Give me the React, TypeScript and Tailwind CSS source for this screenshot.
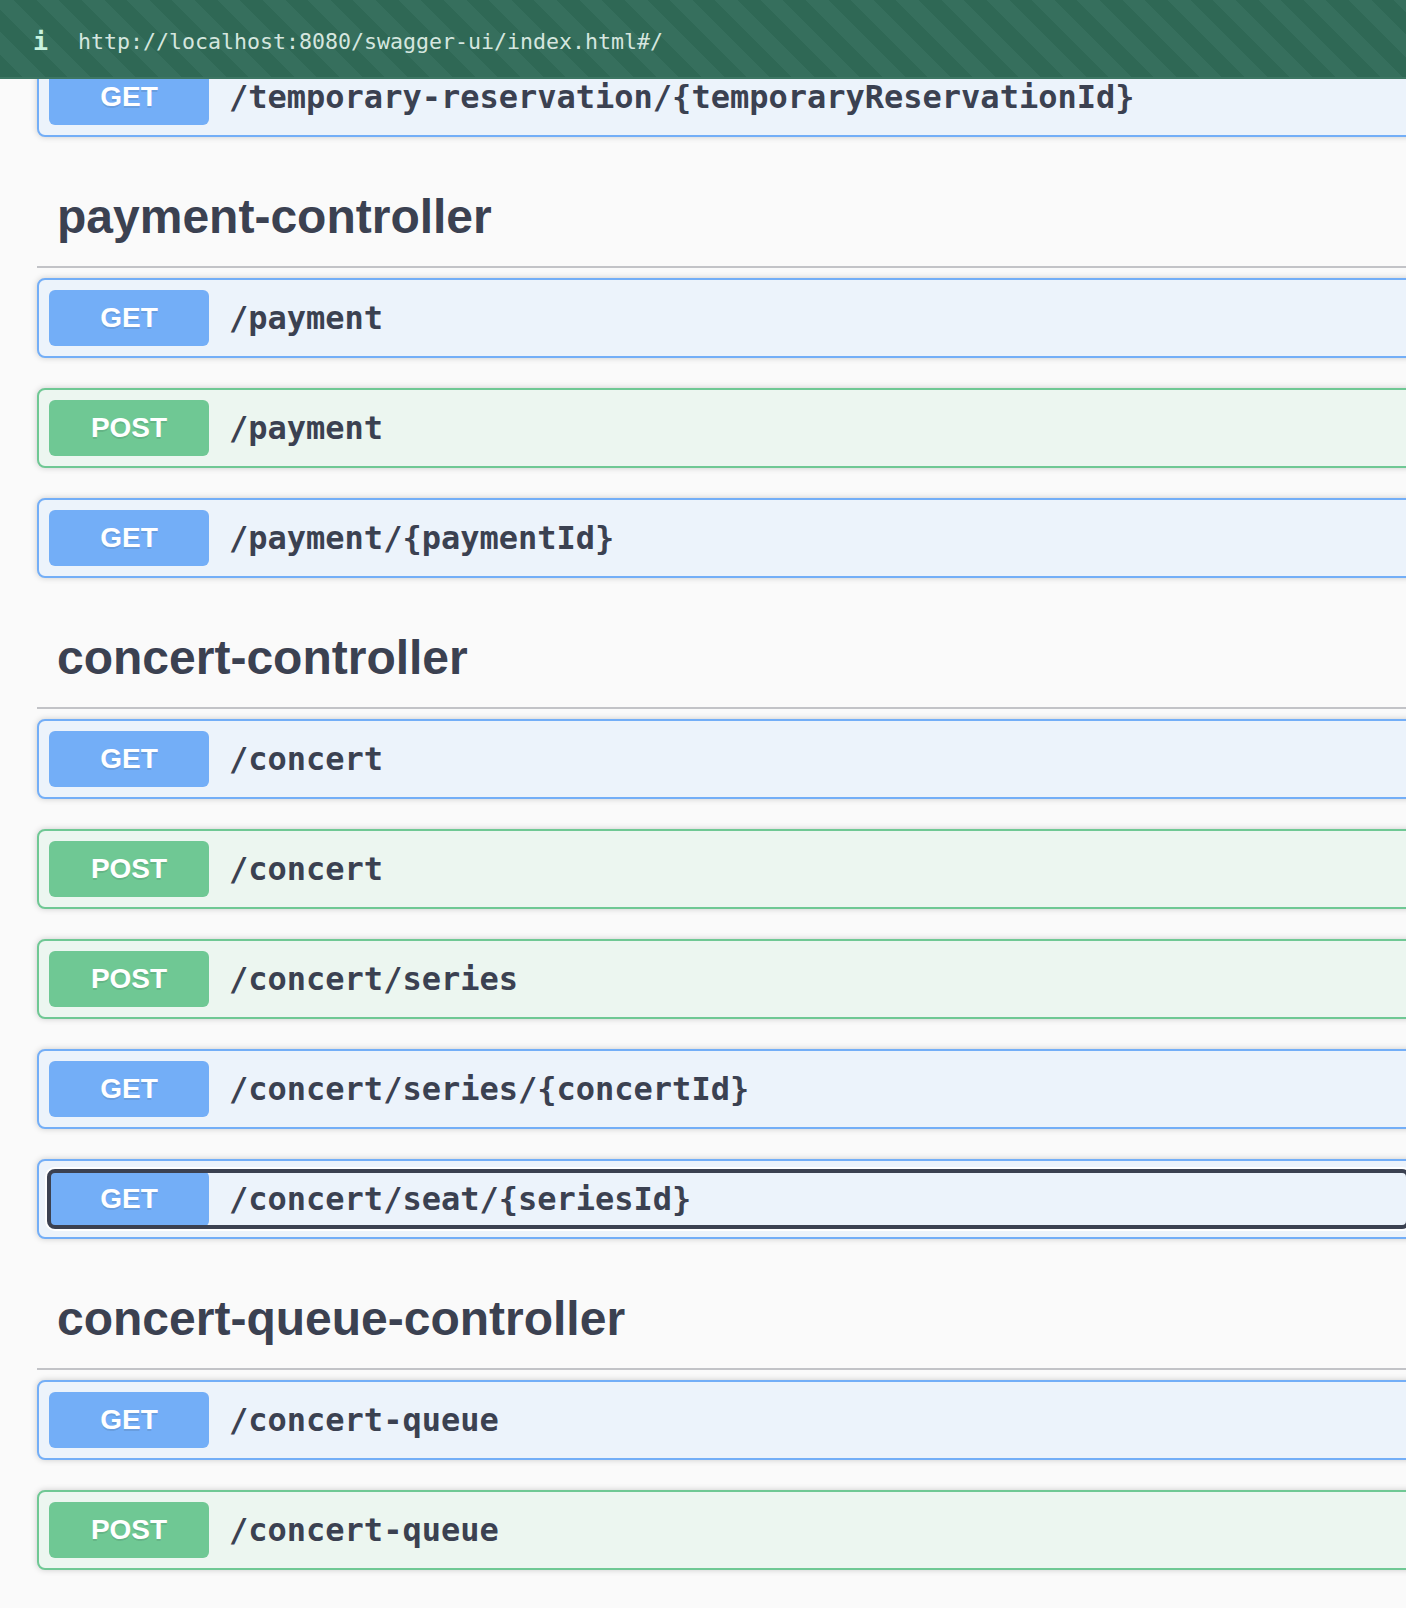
import React from 'react';

type Method = 'GET' | 'POST';

type Op = { method: Method; path: string; focused?: boolean };

const SECTIONS: { name: string; ops: Op[] }[] = [
  {
    name: 'payment-controller',
    ops: [
      { method: 'GET', path: '/payment' },
      { method: 'POST', path: '/payment' },
      { method: 'GET', path: '/payment/{paymentId}' },
    ],
  },
  {
    name: 'concert-controller',
    ops: [
      { method: 'GET', path: '/concert' },
      { method: 'POST', path: '/concert' },
      { method: 'POST', path: '/concert/series' },
      { method: 'GET', path: '/concert/series/{concertId}' },
      { method: 'GET', path: '/concert/seat/{seriesId}', focused: true },
    ],
  },
  {
    name: 'concert-queue-controller',
    ops: [
      { method: 'GET', path: '/concert-queue' },
      { method: 'POST', path: '/concert-queue' },
    ],
  },
];

function OpRow({ op }: { op: Op }) {
  const isGet = op.method === 'GET';
  return (
    <div
      className={`mb-[30px] h-[80px] rounded-[8px] border-2 p-[10px] shadow-[0_0_6px_rgba(0,0,0,0.19)] ${
        isGet ? 'border-[#73aef7] bg-[#ecf3fb]' : 'border-[#6fc894] bg-[#ecf6f0]'
      }`}
    >
      <div className="relative flex h-[56px] items-center">
        <span
          className={`flex h-[56px] w-[160px] shrink-0 items-center justify-center rounded-[6px] font-['Liberation_Sans',Arial,sans-serif] text-[28px] font-bold text-white [text-shadow:0_2px_0_rgba(0,0,0,0.1)] ${
            isGet ? 'bg-[#73aef7]' : 'bg-[#6fc894]'
          }`}
        >
          {op.method}
        </span>
        <span className="pl-[20px] font-['DejaVu_Sans_Mono',monospace] text-[32px] font-bold text-[#3b4151]">
          {op.path}
        </span>
        {op.focused && (
          <div className="absolute -inset-[2px] rounded-[8px] border-4 border-[#3b4151] shadow-[0_0_0_2px_#ffffff]" />
        )}
      </div>
    </div>
  );
}

export default function App() {
  return (
    <div className="relative h-[1608px] w-[1406px] overflow-hidden bg-[#fafafa]">
      <div className="w-[1420px] pl-[37px] pt-[57px]">
        <OpRow op={{ method: 'GET', path: '/temporary-reservation/{temporaryReservationId}' }} />
        {SECTIONS.map((s) => (
          <div key={s.name}>
            <h3 className="mb-[10px] border-b-2 border-[#c2c3c7] pb-[19px] pl-[20px] pt-[20px] font-['Liberation_Sans',Arial,sans-serif] text-[48px] font-bold leading-[60px] text-[#3b4151]">
              {s.name}
            </h3>
            {s.ops.map((op, i) => (
              <OpRow key={i} op={op} />
            ))}
          </div>
        ))}
      </div>

      {/* status overlay bar */}
      <div className="absolute left-0 top-0 flex h-[79px] w-full items-center border-b-2 border-[#3d7663] bg-[repeating-linear-gradient(45deg,#2f6855_0px,#2f6855_16px,#366f5d_16px,#366f5d_32px)] pl-[33px] pt-[7px]">
        <span className="font-['DejaVu_Sans_Mono',monospace] text-[25px] font-bold text-[#c8f3df]">i</span>
        <span className="ml-[30px] font-['DejaVu_Sans_Mono',monospace] text-[21.6px] text-[#d5e6df]">
          http://localhost:8080/swagger-ui/index.html#/
        </span>
      </div>
    </div>
  );
}
